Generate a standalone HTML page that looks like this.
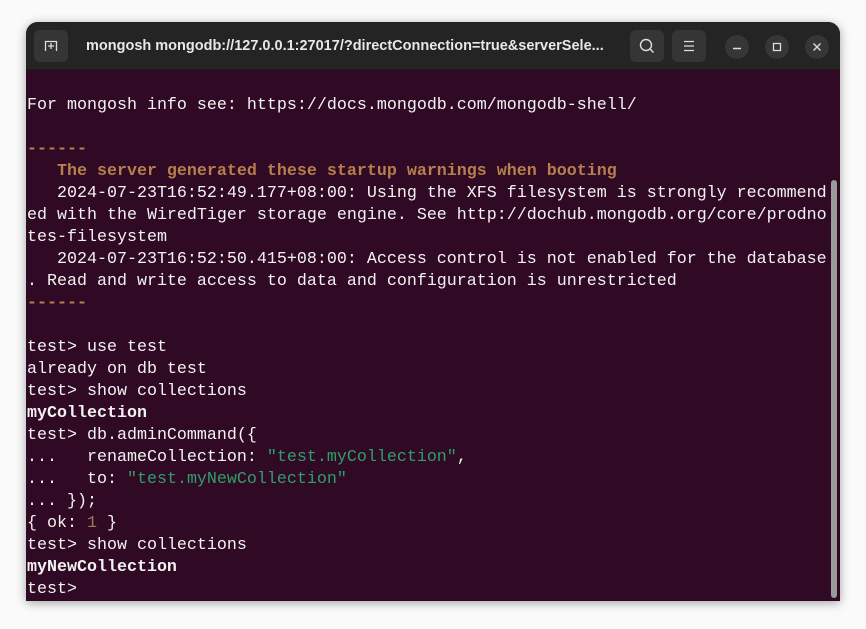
<!DOCTYPE html>
<html><head><meta charset="utf-8"><style>
*{margin:0;padding:0;box-sizing:border-box}
body{width:866px;height:629px;background:#fafafa;position:relative;overflow:hidden;font-family:"Liberation Sans",sans-serif}
.win{position:absolute;left:26px;top:22px;width:814px;height:579px;border-radius:12px 12px 0 0;overflow:hidden;background:#300a24;box-shadow:0 2px 10px rgba(0,0,0,.35)}
.hdr{height:48px;background:#242424;position:relative;border-bottom:1px solid #1a1a1a}
.btn{position:absolute;top:8px;width:34px;height:32px;border-radius:6px;background:#353535}
.title{position:absolute;left:60px;top:0;line-height:48px;color:#e8e8e8;font-weight:bold;font-size:14.5px;white-space:nowrap}
.cb{position:absolute;top:13px;width:24px;height:24px;border-radius:50%;background:#363636}
.term{position:absolute;left:1px;top:73px;font-family:"Liberation Mono",monospace;font-size:16.67px;line-height:22px;color:#f2f2f2;white-space:pre}
.o{color:#b67f4d;font-weight:bold}
.g{color:#2f9e6b}
.n{color:#9d7b4d}
b{font-weight:bold}
.sb{position:absolute;left:805px;top:158px;width:6px;height:418px;border-radius:3px;background:#9b9b9b}
</style></head><body>
<div class="win">
 <div class="hdr">
  <div class="btn" style="left:8px"><svg width="34" height="32" viewBox="0 0 34 32"><path d="M11.5 21V11.5h11V21M14 16h6M17 13v6" stroke="#ddd" stroke-width="1.3" fill="none"/></svg></div>
  <div class="title">mongosh mongodb://127.0.0.1:27017/?directConnection=true&amp;serverSele...</div>
  <div class="btn" style="left:604px"><svg width="34" height="32" viewBox="0 0 34 32"><circle cx="16" cy="15" r="5.5" stroke="#ddd" stroke-width="1.4" fill="none"/><path d="M20 19l3.5 3.5" stroke="#ddd" stroke-width="1.5"/></svg></div>
  <div class="btn" style="left:646px"><svg width="34" height="32" viewBox="0 0 34 32"><path d="M12 11.5h10M12 16h10M12 20.5h10" stroke="#ddd" stroke-width="1.3"/></svg></div>
  <div class="cb" style="left:699px"><svg width="24" height="24"><path d="M8 13.5h8" stroke="#ddd" stroke-width="1.4"/></svg></div>
  <div class="cb" style="left:739px"><svg width="24" height="24"><rect x="8.5" y="8.5" width="7" height="7" stroke="#ddd" stroke-width="1.3" fill="none"/></svg></div>
  <div class="cb" style="left:779px"><svg width="24" height="24"><path d="M8.5 8.5l7 7M15.5 8.5l-7 7" stroke="#ddd" stroke-width="1.4"/></svg></div>
 </div>
 <div class="term">For mongosh info see: https://docs.mongodb.com/mongodb-shell/

<span class="o">------</span>
<span class="o">   The server generated these startup warnings when booting</span>
   2024-07-23T16:52:49.177+08:00: Using the XFS filesystem is strongly recommend
ed with the WiredTiger storage engine. See http://dochub.mongodb.org/core/prodno
tes-filesystem
   2024-07-23T16:52:50.415+08:00: Access control is not enabled for the database
. Read and write access to data and configuration is unrestricted
<span class="o">------</span>

test&gt; use test
already on db test
test&gt; show collections
<b>myCollection</b>
test&gt; db.adminCommand({
...   renameCollection: <span class="g">"test.myCollection"</span>,
...   to: <span class="g">"test.myNewCollection"</span>
... });
{ ok: <span class="n">1</span> }
test&gt; show collections
<b>myNewCollection</b>
test&gt; </div>
 <div class="sb"></div>
</div>
</body></html>
